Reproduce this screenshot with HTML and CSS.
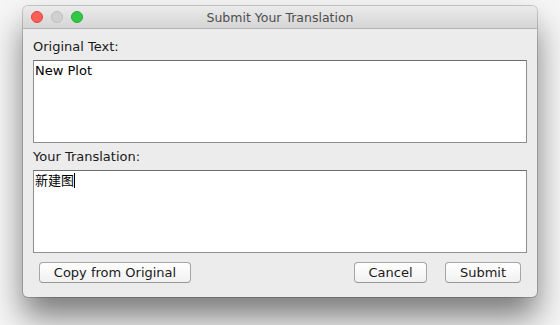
FILE: index.html
```html
<!DOCTYPE html>
<html>
<head>
<meta charset="utf-8">
<link rel="stylesheet" href="styles.css">
</head>
<body>
<div class="window">
  <div class="titlebar">
    <div class="lights">
      <span class="light red"></span>
      <span class="light grey"></span>
      <span class="light green"></span>
    </div>
    <div class="title">Submit Your Translation</div>
  </div>
  <div class="content">
    <div class="label first">Original Text:</div>
    <div class="box">New Plot</div>
    <div class="label">Your Translation:</div>
    <div class="box">新建图<span class="caret"></span></div>
    <div class="buttons">
      <button class="btn copy">Copy from Original</button>
      <div class="spacer"></div>
      <button class="btn cancel">Cancel</button>
      <button class="btn submit">Submit</button>
    </div>
  </div>
</div>
</body>
</html>
```
FILE: styles.css
```css
html, body {
  margin: 0;
  padding: 0;
  background: #f6f6f6;
  width: 560px;
  height: 325px;
  overflow: hidden;
}
body {
  padding: 6px 0 0 23px;
  box-sizing: border-box;
  font-family: "DejaVu Sans", "Noto Sans CJK SC", sans-serif;
}
.window {
  width: 514px;
  height: 291px;
  background: #ececec;
  border-radius: 5px;
  box-shadow: 0 0 0 1px rgba(0,0,0,0.18), 0 20px 32px rgba(0,0,0,0.5);
  overflow: hidden;
  display: flex;
  flex-direction: column;
}
.titlebar {
  height: 22px;
  flex: none;
  background: linear-gradient(#ebebeb, #d5d5d5);
  border-bottom: 1px solid #b4b4b4;
  position: relative;
  display: flex;
  align-items: center;
  justify-content: center;
}
.lights {
  position: absolute;
  left: 8px;
  top: 5px;
  display: flex;
  gap: 8px;
}
.light {
  width: 12px;
  height: 12px;
  border-radius: 50%;
  box-sizing: border-box;
}
.red { background: #fc5f57; border: 1px solid #e0443e; }
.grey { background: #d0d0d0; border: 1px solid #bdbdbd; }
.green { background: #33c748; border: 1px solid #27aa35; }
.title {
  font-size: 12.5px;
  color: #4d4d4d;
  padding-top: 1px;
}
.content {
  padding: 0 10px;
  display: flex;
  flex-direction: column;
}
.label {
  font-size: 13px;
  color: #1a1a1a;
  height: 27px;
  line-height: 17px;
  padding-top: 5px;
  box-sizing: border-box;
}
.label.first {
  height: 31px;
  padding-top: 9px;
}
.box {
  height: 83px;
  box-sizing: border-box;
  background: #fff;
  border: 1px solid #8f8f8f;
  border-top-color: #6d6d6d;
  font-size: 13px;
  line-height: 16px;
  padding: 2px 1px;
  color: #000;
}
.caret {
  display: inline-block;
  width: 1px;
  height: 15px;
  background: #000;
  vertical-align: -3px;
}
.buttons {
  display: flex;
  margin-top: 9px;
  padding: 0 6px;
  gap: 18px;
}
.spacer { flex: 1; }
.btn {
  height: 21px;
  box-sizing: border-box;
  border: 1px solid #a6a6a6;
  border-bottom-color: #979797;
  border-radius: 4px;
  background: linear-gradient(#ffffff, #f1f1f1);
  font-family: "DejaVu Sans", sans-serif;
  font-size: 13px;
  color: #1a1a1a;
  padding: 0;
  line-height: 19px;
}
.copy { width: 152px; }
.cancel { width: 73px; }
.submit { width: 76px; }
```
